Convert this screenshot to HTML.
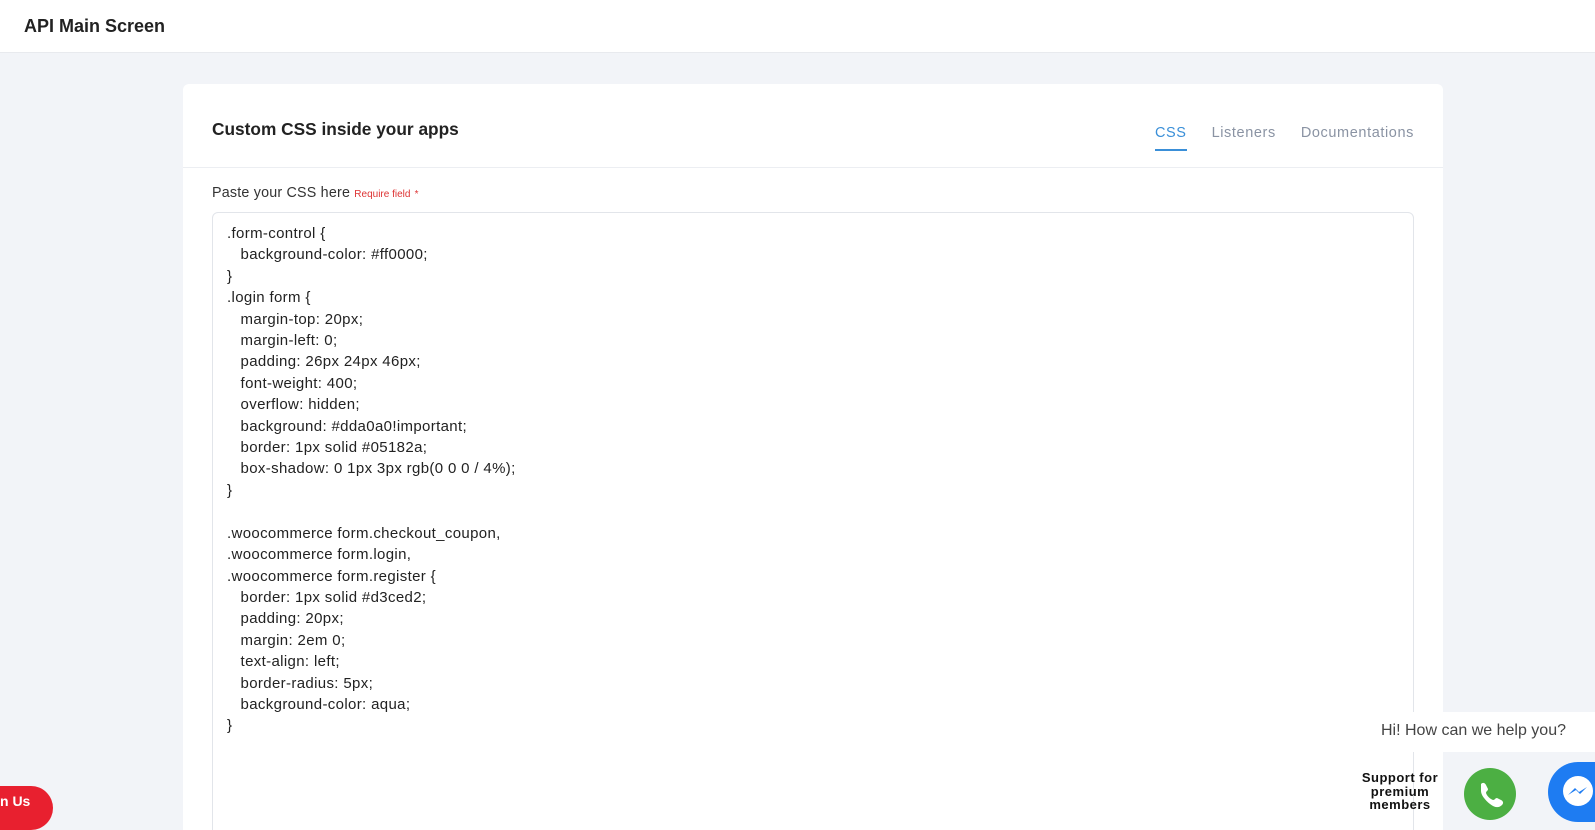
<!DOCTYPE html>
<html><head><style>
*{margin:0;padding:0;box-sizing:border-box}
html,body{width:1595px;height:830px;overflow:hidden}
body{background:#f2f4f8;font-family:"Liberation Sans",sans-serif;color:#222}
.wrap{position:relative;width:1595px;height:830px;overflow:hidden}
.hdr{position:absolute;left:0;top:0;width:1595px;height:53px;background:#fff;border-bottom:1px solid #e8eaee}
.hdr h1{position:absolute;left:24px;top:16px;font-size:18px;font-weight:bold;color:#222}
.card{position:absolute;left:183px;top:84px;width:1260px;height:746px;background:#fff;border-radius:6px 6px 0 0;overflow:hidden}
.title{position:absolute;left:29px;top:35px;font-size:17.3px;font-weight:bold;color:#222}
.tabs{position:absolute;right:29px;top:41px;font-size:14.5px;color:#8a93a3;letter-spacing:.6px}
.tabs span{margin-left:25px;display:inline-block;padding-bottom:8px}
.tabs .a{color:#3a8fd8;border-bottom:2px solid #3a8fd8}
.sep{position:absolute;left:0;right:0;top:83px;border-top:1px solid #eceef2}
.lbl{position:absolute;left:29px;top:101px;font-size:14.3px;color:#333;letter-spacing:.2px}
.lbl small{font-size:10px;color:#d33;letter-spacing:0}
.ta{position:absolute;left:29px;top:128px;width:1202px;height:700px;border:1px solid #e2e5ea;border-radius:6px;padding:10px 14px}
pre{font-family:"Liberation Sans",sans-serif;font-size:15px;line-height:21.4px;color:#222;letter-spacing:.35px}
.bubble{position:absolute;left:1370px;top:712px;width:225px;height:40px;background:#fff;border-radius:10px 0 0 10px;font-size:16px;color:#444;padding:10px 0 0 11px}
.sup{position:absolute;left:1344px;top:771px;width:112px;font-size:13px;font-weight:900;text-align:center;line-height:13.5px;color:#111;letter-spacing:.5px}
.wa{position:absolute;left:1464px;top:768px;width:52px;height:52px;border-radius:50%;background:#4caf43}
.ms{position:absolute;left:1548px;top:762px;width:47px;height:60px;border-radius:30px 0 0 30px;background:#1e7cf2;overflow:hidden}
.red{position:absolute;left:0;top:786px;width:53px;height:44px;border-radius:0 22px 22px 0;background:#e8202f;color:#fff;font-weight:bold;font-size:14px;padding:7px 0 0 0}
</style></head><body><div class="wrap">
<div class="hdr"><h1>API Main Screen</h1></div>
<div class="card">
<div class="title">Custom CSS inside your apps</div>
<div class="tabs"><span class="a">CSS</span><span>Listeners</span><span>Documentations</span></div>
<div class="sep"></div>
<div class="lbl">Paste your CSS here <small>Require field</small> <small>*</small></div>
<div class="ta"><pre>.form-control {
   background-color: #ff0000;
}
.login form {
   margin-top: 20px;
   margin-left: 0;
   padding: 26px 24px 46px;
   font-weight: 400;
   overflow: hidden;
   background: #dda0a0!important;
   border: 1px solid #05182a;
   box-shadow: 0 1px 3px rgb(0 0 0 / 4%);
}

.woocommerce form.checkout_coupon,
.woocommerce form.login,
.woocommerce form.register {
   border: 1px solid #d3ced2;
   padding: 20px;
   margin: 2em 0;
   text-align: left;
   border-radius: 5px;
   background-color: aqua;
}</pre></div>
</div>
<div class="bubble">Hi! How can we help you?</div>
<div class="sup">Support for<br>premium<br>members</div>
<div class="wa"><svg width="52" height="52" viewBox="0 0 52 52"><path d="M17 16c2-2 4-1 5 1l2 4c0 2-2 2-2 4 1 3 4 6 7 7 2 0 2-2 4-2l4 2c2 1 3 3 1 5-3 3-7 3-12-1s-9-9-9-13c0-3 0-5 0-7z" fill="#fff"/></svg></div>
<div class="ms"><svg width="60" height="60" viewBox="0 0 60 60"><circle cx="30" cy="29" r="15" fill="#fff"/><path d="M20 33l7-7 4 4 8-5-7 7-4-4z" fill="#1e7cf2"/></svg></div>
<div class="red">n Us</div>
</div></body></html>
